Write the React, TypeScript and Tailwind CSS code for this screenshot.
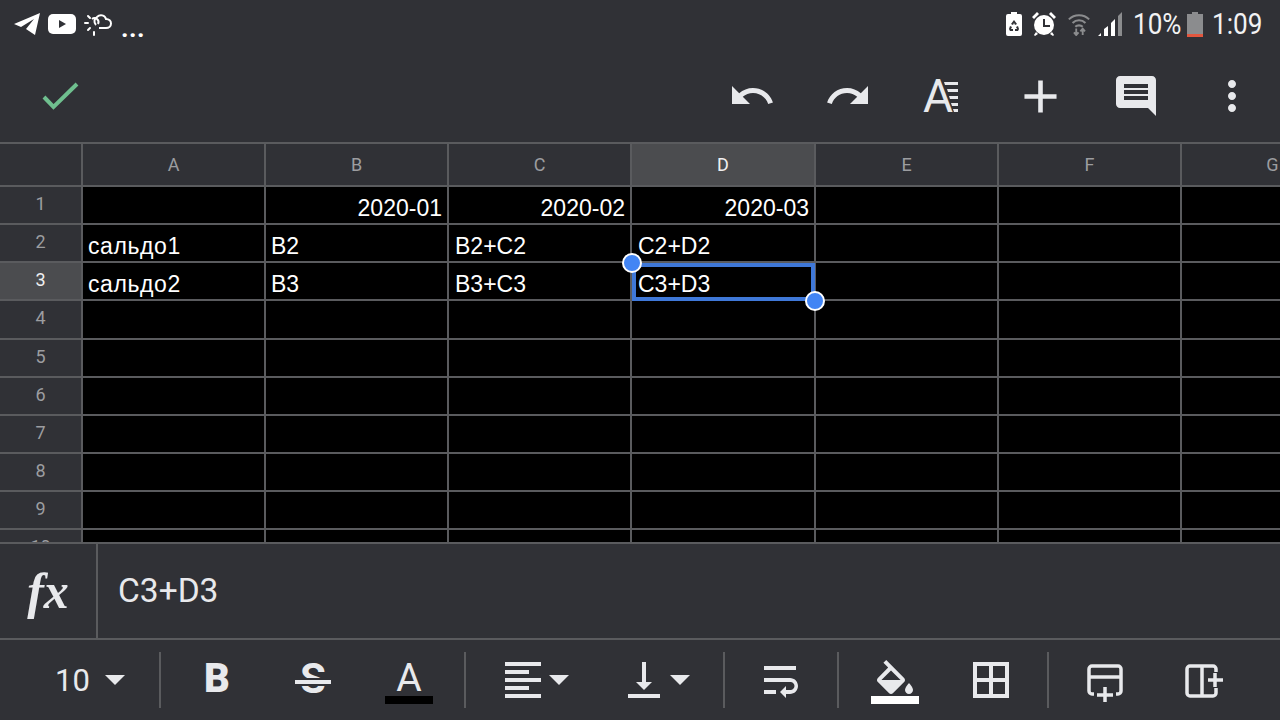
import { type ReactNode } from 'react'

const columns = ['A', 'B', 'C', 'D', 'E', 'F', 'G']
const rowNumbers = [1, 2, 3, 4, 5, 6, 7, 8, 9, 10]

const cells: Record<string, { text: string; right?: boolean; wide?: boolean }> = {
  B1: { text: '2020-01', right: true },
  C1: { text: '2020-02', right: true },
  D1: { text: '2020-03', right: true },
  A2: { text: 'сальдо1', wide: true },
  B2: { text: 'B2' },
  C2: { text: 'B2+C2' },
  D2: { text: 'C2+D2' },
  A3: { text: 'сальдо2', wide: true },
  B3: { text: 'B3' },
  C3: { text: 'B3+C3' },
  D3: { text: 'C3+D3' },
}

/* --------------------------------
   Icons
   -------------------------------- */

function Icon({ d, size = 48, className = '' }: { d: string; size?: number; className?: string }) {
  return (
    <svg width={size} height={size} viewBox="0 0 24 24" className={`fill-[#e8e9ec] ${className}`}>
      <path d={d} />
    </svg>
  )
}

function Caret() {
  return (
    <svg width="20" height="10" viewBox="0 0 20 10" className="fill-[#e8e9ec]">
      <path d="M0 0h20L10 10z" />
    </svg>
  )
}

function TelegramIcon() {
  return (
    <svg width="28" height="24" viewBox="0 0 28 24" className="fill-white">
      <path d="M1 12 27 1 22 23 13 17 21 7 8 15z" strokeLinejoin="round" />
    </svg>
  )
}

function YoutubeIcon() {
  return (
    <svg width="28" height="20" viewBox="0 0 28 20">
      <rect width="28" height="20" rx="5" className="fill-white" />
      <path d="M11 6v8l7-4z" className="fill-[#303136]" />
    </svg>
  )
}

function WeatherIcon() {
  return (
    <svg width="28" height="24" viewBox="0 0 28 24" fill="none" className="stroke-white" strokeWidth="2">
      <path d="M12 13a5 5 0 0 1 1-8c3-3 8-2 9 2 3 0 5 2 5 4.500s-2 4.500-5 4.500h-7" />
      <path d="M14 12a4 4 0 0 0-6-5" />
      <path d="M1 11h3M10 20v3M4 4l2 2M4 18l2-2" strokeLinecap="round" />
    </svg>
  )
}

function SaverIcon() {
  return (
    <svg width="16" height="24" viewBox="0 0 16 24">
      <path d="M5 0h6v2h3a2 2 0 0 1 2 2v18a2 2 0 0 1-2 2H2a2 2 0 0 1-2-2V4a2 2 0 0 1 2-2h3z" className="fill-white" />
      <path d="M8 8l3 4-2 1-1-2-1 2-2-1zM4 14l2 1-1 2h2v2H4l-1-2zM12 14l1 3-1 2H9v-2h2l-1-2z" className="fill-[#303136]" />
    </svg>
  )
}

function AlarmIcon() {
  return (
    <svg width="26" height="26" viewBox="0 0 26 26">
      <circle cx="13" cy="14" r="10" className="fill-white" />
      <path d="M1 6l5-5 2 2-5 5zM25 6l-5-5-2 2 5 5zM5 21l-2 3 1 1 3-2zM21 21l2 3-1 1-3-2z" className="fill-white" />
      <path d="M12 8h2v6h5v2h-7z" className="fill-[#303136]" />
    </svg>
  )
}

function WifiIcon() {
  return (
    <svg width="24" height="24" viewBox="0 0 24 26" fill="none" className="stroke-[#8b8c8e]" strokeWidth="2.2">
      <path d="M1 8c6-6 16-6 22 0M5 12c4-4 10-4 14 0M8 16c2-2 6-2 8 0" />
      <path d="M9 18v7M6.500 22l2.500 3 2.500-3M16 25v-7M13.500 21l2.500-3 2.500 3" strokeWidth="2" />
    </svg>
  )
}

function SignalIcon() {
  return (
    <svg width="24" height="24" viewBox="0 0 24 24">
      <path d="M0 24l3-3v3zM6 24v-7l4-3v10zM13 24V11l4-4v17z" className="fill-white" />
      <path d="M20 24V4l4-4v24z" className="fill-[#8b8c8e]" />
    </svg>
  )
}

function BatteryIcon() {
  return (
    <svg width="16" height="25" viewBox="0 0 16 25">
      <path d="M5 0h6v2h5v20H0V2h5z" className="fill-[#8b8c8e]" />
      <rect y="22" width="16" height="3" className="fill-[#e2573f]" />
    </svg>
  )
}

/* Text format icon: the letter stays real text, only the lines are drawn */
function TextFormatIcon() {
  return (
    <div className="flex items-center w-[42px]">
      <span className="font-['Roboto',sans-serif] text-[46px] leading-none text-[#e8e9ec]">A</span>
      <svg width="14" height="30" viewBox="0 0 14 30" className="fill-[#e8e9ec] -ml-[9px] mt-[2px]">
        <path d="M0 0h14v3H1zM3 7h11v3H4zM5 14h9v3H6zM7 21h7v3H8zM9 27h5v3h-4z" />
      </svg>
    </div>
  )
}

function InsertRowIcon() {
  return (
    <svg width="48" height="48" viewBox="0 0 48 48" fill="none" className="stroke-[#e8e9ec]" strokeWidth="3.5">
      <path d="M13 38h-2a3 3 0 0 1-3-3V13a3 3 0 0 1 3-3h26a3 3 0 0 1 3 3v22a3 3 0 0 1-3 3h-2" />
      <path d="M9 21h30M24 31v15M16 39h16" />
    </svg>
  )
}

function InsertColumnIcon() {
  return (
    <svg width="48" height="48" viewBox="0 0 48 48" fill="none" className="stroke-[#e8e9ec]" strokeWidth="3.5">
      <path d="M37 16v-3a3 3 0 0 0-3-3H11a3 3 0 0 0-3 3v24a3 3 0 0 0 3 3h23a3 3 0 0 0 3-3v-5" />
      <path d="M23 10v30M36 17v14M29 24h15" />
    </svg>
  )
}

/* --------------------------------
   Bars
   -------------------------------- */

function StatusBar() {
  return (
    <div className="h-[50px] shrink-0 flex items-center justify-between pb-[2px] pl-[13px] pr-[18px]">
      <div className="flex items-center">
        <TelegramIcon />
        <div className="ml-[7px]"><YoutubeIcon /></div>
        <div className="ml-[8px]"><WeatherIcon /></div>
        <span className="ml-[9px] mt-[8px] text-[26px] leading-none text-white font-['Roboto',sans-serif] font-bold tracking-[0.5px]">...</span>
      </div>
      <div className="flex items-center text-[#f2f2f3] font-['Roboto',sans-serif]">
        <SaverIcon />
        <div className="ml-[9px]"><AlarmIcon /></div>
        <div className="ml-[10px]"><WifiIcon /></div>
        <div className="ml-[7px]"><SignalIcon /></div>
        <span className="ml-[11px] w-[48px] text-[30px] leading-none whitespace-nowrap origin-left scale-x-[0.87]">10%</span>
        <div className="ml-[6px]"><BatteryIcon /></div>
        <span className="ml-[9px] w-[50px] text-[30px] leading-none whitespace-nowrap origin-left scale-x-[0.87]">1:09</span>
      </div>
    </div>
  )
}

function TopToolbar() {
  const btn = 'w-[96px] h-[48px] flex items-center justify-center'
  return (
    <div className="h-[92px] shrink-0 flex items-center justify-between">
      <svg width="40" height="32" viewBox="0 0 40 32" fill="none" className="ml-[41px] stroke-[#6fbf8f]" strokeWidth="4">
        <path d="M3 17l9.500 10L36 4" />
      </svg>
      <div className="flex items-center">
        <div className={btn}><Icon d="M12.5 8c-2.65 0-5.05.99-6.9 2.6L2 7v9h9l-3.62-3.62c1.39-1.16 3.16-1.88 5.12-1.88 3.54 0 6.55 2.31 7.6 5.5l2.37-.78C21.08 11.03 17.15 8 12.5 8z" /></div>
        <div className={btn}><Icon d="M18.4 10.6C16.55 8.99 14.15 8 11.5 8c-4.65 0-8.58 3.03-9.96 7.22L3.9 16c1.05-3.19 4.05-5.5 7.6-5.5 1.95 0 3.73.72 5.12 1.88L13 16h9V7l-3.6 3.6z" /></div>
        <div className={btn}><TextFormatIcon /></div>
        <div className={btn}><Icon d="M19 13h-6v6h-2v-6H5v-2h6V5h2v6h6v2z" size={55} className="shrink-0" /></div>
        <div className={btn}><Icon d="M21.99 4c0-1.1-.89-2-1.99-2H4c-1.1 0-2 .9-2 2v12c0 1.1.9 2 2 2h14l4 4-.01-18zM18 14H6v-2h12v2zm0-3H6V9h12v2zm0-3H6V6h12v2z" /></div>
        <div className={btn}><Icon d="M12 8c1.1 0 2-.9 2-2s-.9-2-2-2-2 .9-2 2 .9 2 2 2zm0 2c-1.1 0-2 .9-2 2s.9 2 2 2 2-.9 2-2-.9-2-2-2zm0 6c-1.1 0-2 .9-2 2s.9 2 2 2 2-.9 2-2-.9-2-2-2z" /></div>
      </div>
    </div>
  )
}

/* --------------------------------
   Sheet
   -------------------------------- */

function Cell({ col, row }: { col: string; row: number }) {
  const id = `${col}${row}`
  const cell = cells[id]
  const selected = id === 'D3'
  return (
    <div
      className={`relative shrink-0 h-full flex items-end pb-[1px] pr-[5px] border-r-2 border-[#5a5b5e] ${
        col === 'D' ? 'w-[184px]' : 'w-[183px]'
      } ${col === 'C' || col === 'D' ? 'pl-[6px]' : 'pl-[5px]'} ${cell?.right ? 'justify-end' : 'justify-start'}`}
    >
      {cell && (
        <span
          className={`font-['Liberation_Sans',Arial,sans-serif] text-[23px] leading-[28px] text-white whitespace-nowrap ${
            cell.wide ? 'tracking-[0.6px]' : ''
          }`}
        >
          {cell.text}
        </span>
      )}
      {selected && (
        <div className="absolute top-0 -bottom-[2px] left-0 -right-[1px] border-[4px] border-[#3f78d8] z-10">
          <div className="absolute -left-[14px] -top-[14px] w-[20px] h-[20px] rounded-full bg-[#4285f4] border-2 border-white" />
          <div className="absolute -right-[14px] -bottom-[14px] w-[20px] h-[20px] rounded-full bg-[#4285f4] border-2 border-white" />
        </div>
      )}
    </div>
  )
}

function Sheet() {
  return (
    <div className="h-[402px] shrink-0 overflow-hidden border-t-2 border-[#5a5b5e]">
      <div className="h-[43px] flex border-b-2 border-[#5a5b5e]">
        <div className="w-[83px] shrink-0 border-r-2 border-[#5a5b5e]" />
        {columns.map((col) => (
          <div
            key={col}
            className={`shrink-0 flex items-center justify-center border-r-2 border-[#5a5b5e] font-['Roboto',sans-serif] text-[18px] ${
              col === 'D' ? 'w-[184px] bg-[#4b4c4f] text-[#f0f0f1]' : 'w-[183px] text-[#9c9da0]'
            }`}
          >
            {col}
          </div>
        ))}
      </div>
      {rowNumbers.map((row) => (
        <div key={row} className={`flex border-b-2 border-[#5a5b5e] box-border ${row === 4 ? 'h-[39px]' : 'h-[38px]'}`}>
          <div
            className={`w-[83px] shrink-0 h-full flex items-center justify-center pb-[4px] border-r-2 border-[#5a5b5e] font-['Roboto',sans-serif] text-[18px] ${
              row === 3 ? 'bg-[#4b4c4f] text-[#f0f0f1]' : 'text-[#9c9da0]'
            }`}
          >
            {row}
          </div>
          <div className="flex bg-black">
            {columns.map((col) => (
              <Cell key={col} col={col} row={row} />
            ))}
          </div>
        </div>
      ))}
    </div>
  )
}

function FormulaBar() {
  return (
    <div className="h-[98px] shrink-0 flex border-t-2 border-b-2 border-[#5a5b5e] -mt-[2px]">
      <div className="w-[98px] shrink-0 flex items-center justify-center border-r-2 border-[#5a5b5e]">
        <span className="font-['Liberation_Serif',serif] italic font-bold text-[50px] leading-none text-[#e8e9ec]">fx</span>
      </div>
      <div className="flex items-center pl-[20px] font-['Roboto',sans-serif] text-[33.500px] text-[#e8e9ec]">C3+D3</div>
    </div>
  )
}

/* --------------------------------
   Format toolbar
   -------------------------------- */

function Divider({ className = '' }: { className?: string }) {
  return <div className={`w-[2px] h-[56px] bg-[#5a5b5e] shrink-0 ${className}`} />
}

function ToolButton({ children, width = 'w-[96px]' }: { children: ReactNode; width?: string }) {
  return <div className={`${width} h-full shrink-0 flex items-center justify-center`}>{children}</div>
}

function FormatToolbar() {
  return (
    <div className="flex-1 flex items-center font-['Roboto',sans-serif] text-[#e8e9ec]">
      <div className="w-[159px] shrink-0 flex items-center pl-[55px]">
        <span className="text-[31px] leading-none">10</span>
        <div className="ml-[15px]"><Caret /></div>
      </div>
      <Divider />
      <div className="flex h-full ml-[8px]">
        <ToolButton><span className="text-[40px] leading-none font-black -mt-[2px]">B</span></ToolButton>
        <ToolButton>
          <span className="relative text-[42px] leading-none font-bold -mt-[2px]">
            S
            <span className="absolute left-1/2 top-[22px] -translate-x-1/2 w-[36px] h-[4px] bg-[#e8e9ec] ring-2 ring-[#303136]" />
          </span>
        </ToolButton>
        <ToolButton>
          <div className="flex flex-col items-center mt-[4px]">
            <div className="h-[35px] flex items-start justify-center">
              <span className="text-[39px] leading-[34px]">A</span>
            </div>
            <div className="w-[48px] h-[8px] bg-black" />
          </div>
        </ToolButton>
      </div>
      <Divider className="ml-[7px]" />
      <div className="flex h-full ml-[10px]">
        <ToolButton width="w-[120px]">
          <svg width="36" height="36" viewBox="0 0 36 36" className="fill-[#e8e9ec] ml-[2px]">
            <path d="M0 0h36v4H0zM0 8h24v4H0zM0 16h36v4H0zM0 24h24v4H0zM0 32h36v4H0z" />
          </svg>
          <div className="ml-[8px]"><Caret /></div>
        </ToolButton>
        <ToolButton width="w-[120px]">
          <Icon d="M16 13h-3V3h-2v10H8l4 4 4-4zM4 19v2h16v-2H4z" className="-mx-[3px]" />
          <div className="ml-[5px]"><Caret /></div>
        </ToolButton>
      </div>
      <Divider className="ml-[7px]" />
      <div className="flex h-full ml-[7px]">
        <ToolButton><Icon d="M4 19h6v-2H4v2zM20 5H4v2h16V5zm-3 6H4v2h13.25c1.1 0 2 .9 2 2s-.9 2-2 2H15v-2l-3 3 3 3v-2h2c2.21 0 4-1.79 4-4s-1.79-4-4-4z" /></ToolButton>
      </div>
      <Divider className="ml-[9px]" />
      <div className="flex h-full ml-[8px]">
        <ToolButton>
          <div className="flex flex-col items-center mt-[3px]">
            <div className="h-[36px] w-[48px]">
              <Icon d="M16.56 8.94L7.62 0 6.21 1.41l2.38 2.38-5.15 5.15c-.59.59-.59 1.54 0 2.12l5.5 5.5c.29.29.68.44 1.06.44s.77-.15 1.06-.44l5.5-5.5c.59-.58.59-1.53 0-2.12zM5.21 10L10 5.21 14.79 10H5.21zM19 11.5s-2 2.17-2 3.5c0 1.1.9 2 2 2s2-.9 2-2c0-1.33-2-3.5-2-3.5z" />
            </div>
            <div className="w-[48px] h-[8px] bg-white" />
          </div>
        </ToolButton>
        <ToolButton><Icon d="M3 3v18h18V3H3zm8 16H5v-6h6v6zm0-8H5V5h6v6zm8 8h-6v-6h6v6zm0-8h-6V5h6v6z" /></ToolButton>
      </div>
      <Divider className="ml-[8px]" />
      <div className="flex h-full ml-[8px]">
        <ToolButton><InsertRowIcon /></ToolButton>
        <ToolButton width="w-[100px]"><InsertColumnIcon /></ToolButton>
      </div>
    </div>
  )
}

export default function App() {
  return (
    <div className="w-[1280px] h-[720px] overflow-hidden flex flex-col bg-[#303136]">
      <StatusBar />
      <TopToolbar />
      <Sheet />
      <FormulaBar />
      <FormatToolbar />
    </div>
  )
}
